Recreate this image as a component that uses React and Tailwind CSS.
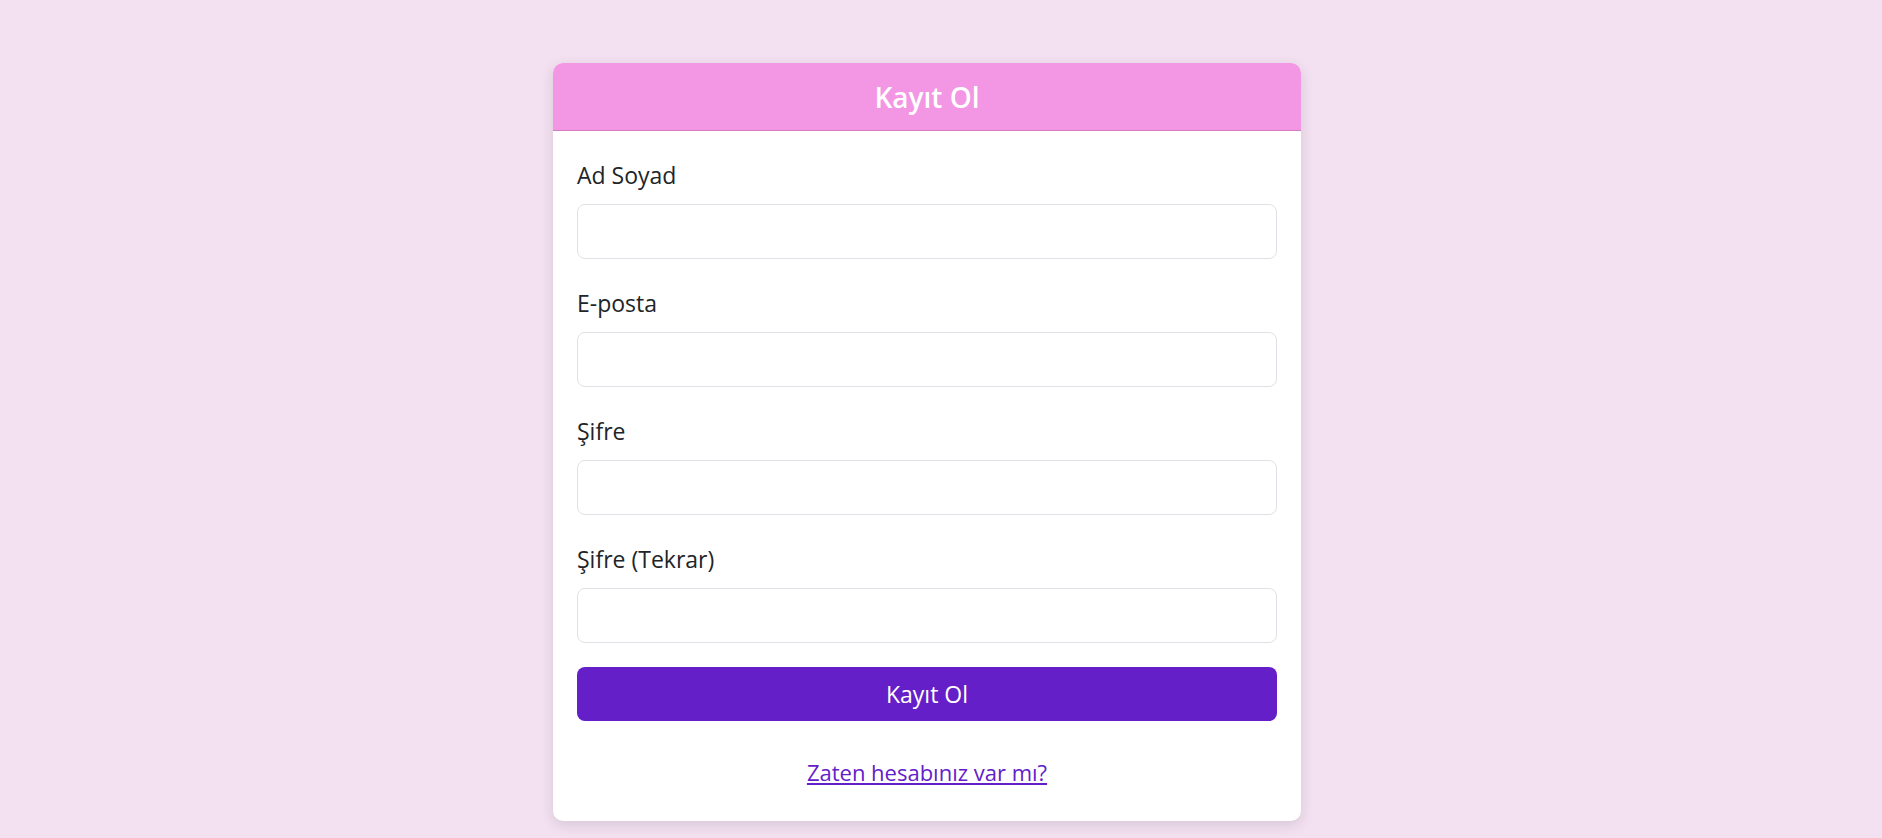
import React, { useState } from 'react'

const fields = [
  { name: 'fullName', label: 'Ad Soyad', type: 'text' },
  { name: 'email', label: 'E-posta', type: 'email' },
  { name: 'password', label: 'Şifre', type: 'password' },
  { name: 'passwordAgain', label: 'Şifre (Tekrar)', type: 'password' },
]

const App = () => {
  const [formData, setFormData] = useState({
    fullName: '',
    email: '',
    password: '',
    passwordAgain: '',
  })

  // input degisince state guncelle
  const handleChange = (e) => {
    const { name, value } = e.target
    setFormData({ ...formData, [name]: value })
  }

  const handleSubmit = (e) => {
    e.preventDefault()
  }

  return (
    <div className="min-h-screen bg-[#f3e1f1] pt-[63px] pr-[28px] pb-4" style={{ fontFamily: '"Open Sans", "Noto Sans", sans-serif' }}>
      <div className="mx-auto w-[748px] overflow-hidden rounded-[10px] bg-white shadow-[0_4px_14px_rgba(0,0,0,0.12)]">
        {/* Header */}
        <div className="flex h-[68px] items-center justify-center border-b border-[#d27cc2] bg-[#f396e3]">
          <h1 className="text-[28px] font-semibold text-white">Kayıt Ol</h1>
        </div>

        <form onSubmit={handleSubmit} className="px-6 pt-[26px] pb-[31px]">
          {fields.map((f, i) => (
            <div key={f.name} className={i === fields.length - 1 ? 'mb-[24px]' : 'mb-[26px]'}>
              <label htmlFor={f.name} className="block text-[23px] leading-[36px] text-[#212529]">
                {f.label}
              </label>
              <input
                id={f.name}
                name={f.name}
                type={f.type}
                value={formData[f.name]}
                onChange={handleChange}
                className="mt-[11px] block h-[55px] w-full rounded-[8px] border border-[#dee2e6] bg-white px-3 text-[23px] outline-none"
              />
            </div>
          ))}

          {/* Submit */}
          <button
            type="submit"
            className="block h-[54px] w-full rounded-[8px] bg-[#651fc8] text-[23px] text-white"
          >
            Kayıt Ol
          </button>

          <div className="mt-[33px] text-center">
            <a href="#" className="text-[22px] leading-[36px] text-[#6420c8] underline">
              Zaten hesabınız var mı?
            </a>
          </div>
        </form>
      </div>
    </div>
  )
}

export default App
